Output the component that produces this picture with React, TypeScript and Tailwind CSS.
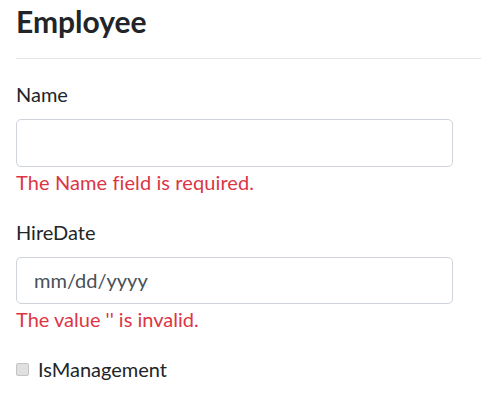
export default function App() {
  return (
    <div
      className="min-h-screen bg-white pl-4 text-[#212529] [font-variant-ligatures:none]"
      style={{ fontFamily: 'Lato, "Open Sans", sans-serif' }}
    >
      <h4 className="pt-[3px] text-[30px] font-bold leading-[36px]">Employee</h4>
      <hr className="mt-[19px] mb-[20px] border-t border-[#e5e5e5]" />
      <form className="w-[437px] text-[20px] leading-[30px]">
        <div className="mb-[20px]">
          <label className="mb-[10px] block">Name</label>
          <input
            type="text"
            className="block h-[47.5px] w-full rounded-[5px] border border-[#ced4da] px-[15px] text-[#495057] outline-none"
          />
          <span className="block tracking-[0.1px] text-[#dc3545]">The Name field is required.</span>
        </div>
        <div className="mb-[20px]">
          <label className="mb-[10px] block">HireDate</label>
          <div className="flex h-[47.5px] w-full items-center rounded-[5px] border border-[#ced4da] pl-[17px] text-[#495057]">
            mm/dd/yyyy
          </div>
          <span className="block text-[#dc3545]">The value '' is invalid.</span>
        </div>
        <label className="flex items-center gap-[9px]">
          <span className="h-[13px] w-[13px] rounded-[2px] border border-[#c4c4c4] bg-[#e0e0e0]" />
          IsManagement
        </label>
      </form>
    </div>
  );
}
